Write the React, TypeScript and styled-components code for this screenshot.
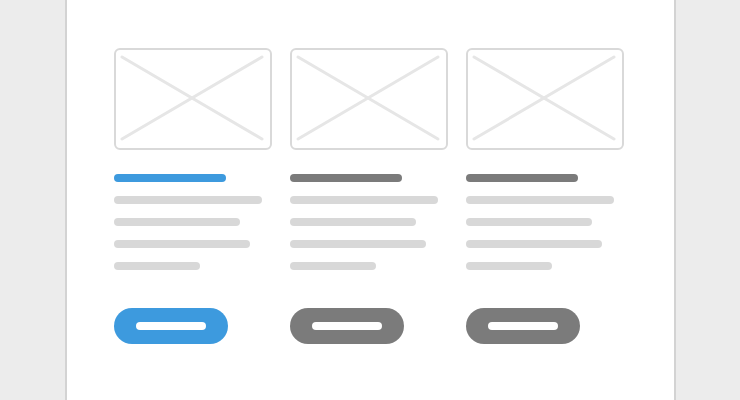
import React from "react";
import styled, { createGlobalStyle } from "styled-components";

const Global = createGlobalStyle`
  html, body {
    margin: 0;
    padding: 0;
    background: #ececec;
    font-family: "Liberation Sans", Arial, sans-serif;
  }
  #root {
    height: 400px;
    overflow: hidden;
  }
`;

const Page = styled.div`
  display: flex;
  height: 400px;
  padding-left: 65px;
`;

const Panel = styled.main`
  box-sizing: border-box;
  width: 611px;
  height: 400px;
  background: #ffffff;
  border-left: 2px solid #d3d3d3;
  border-right: 2px solid #d3d3d3;
  padding: 48px 0 0 47px;
`;

const Grid = styled.div`
  display: grid;
  grid-template-columns: repeat(3, 158px);
  column-gap: 18px;
`;

const Card = styled.section`
  display: flex;
  flex-direction: column;
  align-items: flex-start;
`;

const Thumb = styled.div`
  box-sizing: border-box;
  width: 158px;
  height: 102px;
  border: 2px solid #d9d9d9;
  border-radius: 6px;
  display: flex;
  align-items: center;
  justify-content: center;
`;

const Lines = styled.div`
  display: flex;
  flex-direction: column;
  gap: 14px;
  margin-top: 24px;
`;

const Bar = styled.div<{ $w: number; $tone: string }>`
  width: ${(p) => p.$w}px;
  height: 8px;
  border-radius: 4px;
  background: ${(p) => p.$tone};
`;

const Button = styled.button<{ $tone: string }>`
  margin-top: 38px;
  width: 114px;
  height: 36px;
  border: none;
  border-radius: 18px;
  background: ${(p) => p.$tone};
  padding: 0;
  display: flex;
  align-items: center;
  justify-content: center;
  cursor: pointer;
`;

const Label = styled.span`
  display: block;
  width: 70px;
  height: 8px;
  border-radius: 4px;
  background: #ffffff;
`;

const Placeholder = () => (
  <svg width="154" height="98" viewBox="0 0 154 98">
    <line x1="6" y1="7" x2="146" y2="89" stroke="#e6e6e6" strokeWidth="3" strokeLinecap="round" />
    <line x1="146" y1="7" x2="6" y2="89" stroke="#e6e6e6" strokeWidth="3" strokeLinecap="round" />
  </svg>
);

const cards = [
  { accent: "#3d9ade" },
  { accent: "#7b7b7b" },
  { accent: "#7b7b7b" },
];

const bodyWidths = [148, 126, 136, 86];

export default function App() {
  return (
    <>
      <Global />
      <Page>
        <Panel>
          <Grid>
            {cards.map((c, i) => (
              <Card key={i}>
                <Thumb>
                  <Placeholder />
                </Thumb>
                <Lines>
                  <Bar $w={112} $tone={c.accent} />
                  {bodyWidths.map((w, j) => (
                    <Bar key={j} $w={w} $tone="#d8d8d8" />
                  ))}
                </Lines>
                <Button $tone={c.accent}>
                  <Label />
                </Button>
              </Card>
            ))}
          </Grid>
        </Panel>
      </Page>
    </>
  );
}
